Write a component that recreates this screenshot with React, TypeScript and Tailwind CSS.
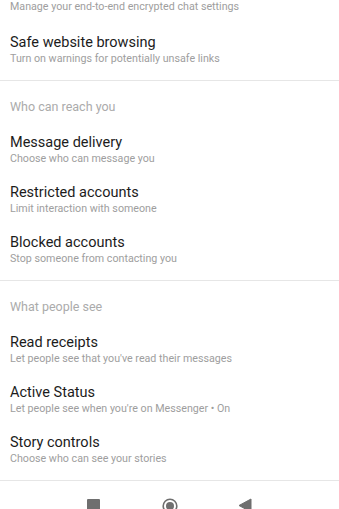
import React from 'react'

interface Item {
    title: string;
    subtitle: string;
}

interface Section {
    header?: string;
    items: Item[];
}

const sections: Section[] = [
    {
        items: [
            { title: "Safe website browsing", subtitle: "Turn on warnings for potentially unsafe links" },
        ],
    },
    {
        header: "Who can reach you",
        items: [
            { title: "Message delivery", subtitle: "Choose who can message you" },
            { title: "Restricted accounts", subtitle: "Limit interaction with someone" },
            { title: "Blocked accounts", subtitle: "Stop someone from contacting you" },
        ],
    },
    {
        header: "What people see",
        items: [
            { title: "Read receipts", subtitle: "Let people see that you've read their messages" },
            { title: "Active Status", subtitle: "Let people see when you're on Messenger • On" },
            { title: "Story controls", subtitle: "Choose who can see your stories" },
        ],
    },
]

function Row({ item }: { item: Item }) {
    return (
        <div className='h-[50px] shrink-0 px-[10px] pt-2 flex flex-col'>
            <p className='text-[14.5px] leading-[18px] text-[#1c1c1c]'>{item.title}</p>
            <p className='text-[10.7px] leading-[14px] text-[#9e9e9e]'>{item.subtitle}</p>
        </div>
    )
}

export default function App() {
    return (
        <div className='w-[339px] h-[509px] overflow-hidden bg-white flex flex-col' style={{ fontFamily: 'Roboto, "Noto Sans", sans-serif' }}>
            <div className='shrink-0 flex flex-col'>
                {/* tail of the row scrolled above the top edge */}
                <div className='h-[26px] shrink-0 px-[10px]'>
                    <p className='text-[10.7px] leading-[14px] text-[#9e9e9e]'>Manage your end-to-end encrypted chat settings</p>
                </div>
                {sections.map((section, i) => (
                    <div key={i} className={`shrink-0 flex flex-col pb-1 ${i > 0 ? 'border-t border-t-[#e6e6e6]' : ''}`}>
                        {section.header && (
                            <div className='h-[45px] shrink-0 px-[10px] pt-[19px]'>
                                <p className='text-[12.5px] leading-[14px] text-[#ababab]'>{section.header}</p>
                            </div>
                        )}
                        {section.items.map((item, j) => (
                            <Row key={j} item={item} />
                        ))}
                    </div>
                ))}
            </div>
            {/* android nav bar */}
            <div className='h-[50px] shrink-0 border-t border-t-[#e6e6e6] flex flex-row items-center justify-center gap-[62px]'>
                <div className='w-[13px] h-[13px] rounded-[1px] bg-[#6f6f6f]' />
                <svg width="16" height="16" viewBox="0 0 16 16">
                    <circle cx="8" cy="8" r="6.8" fill="none" stroke="#6f6f6f" strokeWidth="1.6" />
                    <circle cx="8" cy="8" r="4" fill="#6f6f6f" />
                </svg>
                <svg width="14" height="15" viewBox="0 0 14 15" className='-ml-[2px]'>
                    <path d="M13 1 L13 14 L1 7.5 Z" fill="#6f6f6f" stroke="#6f6f6f" strokeWidth="1" strokeLinejoin="round" />
                </svg>
            </div>
        </div>
    )
}
